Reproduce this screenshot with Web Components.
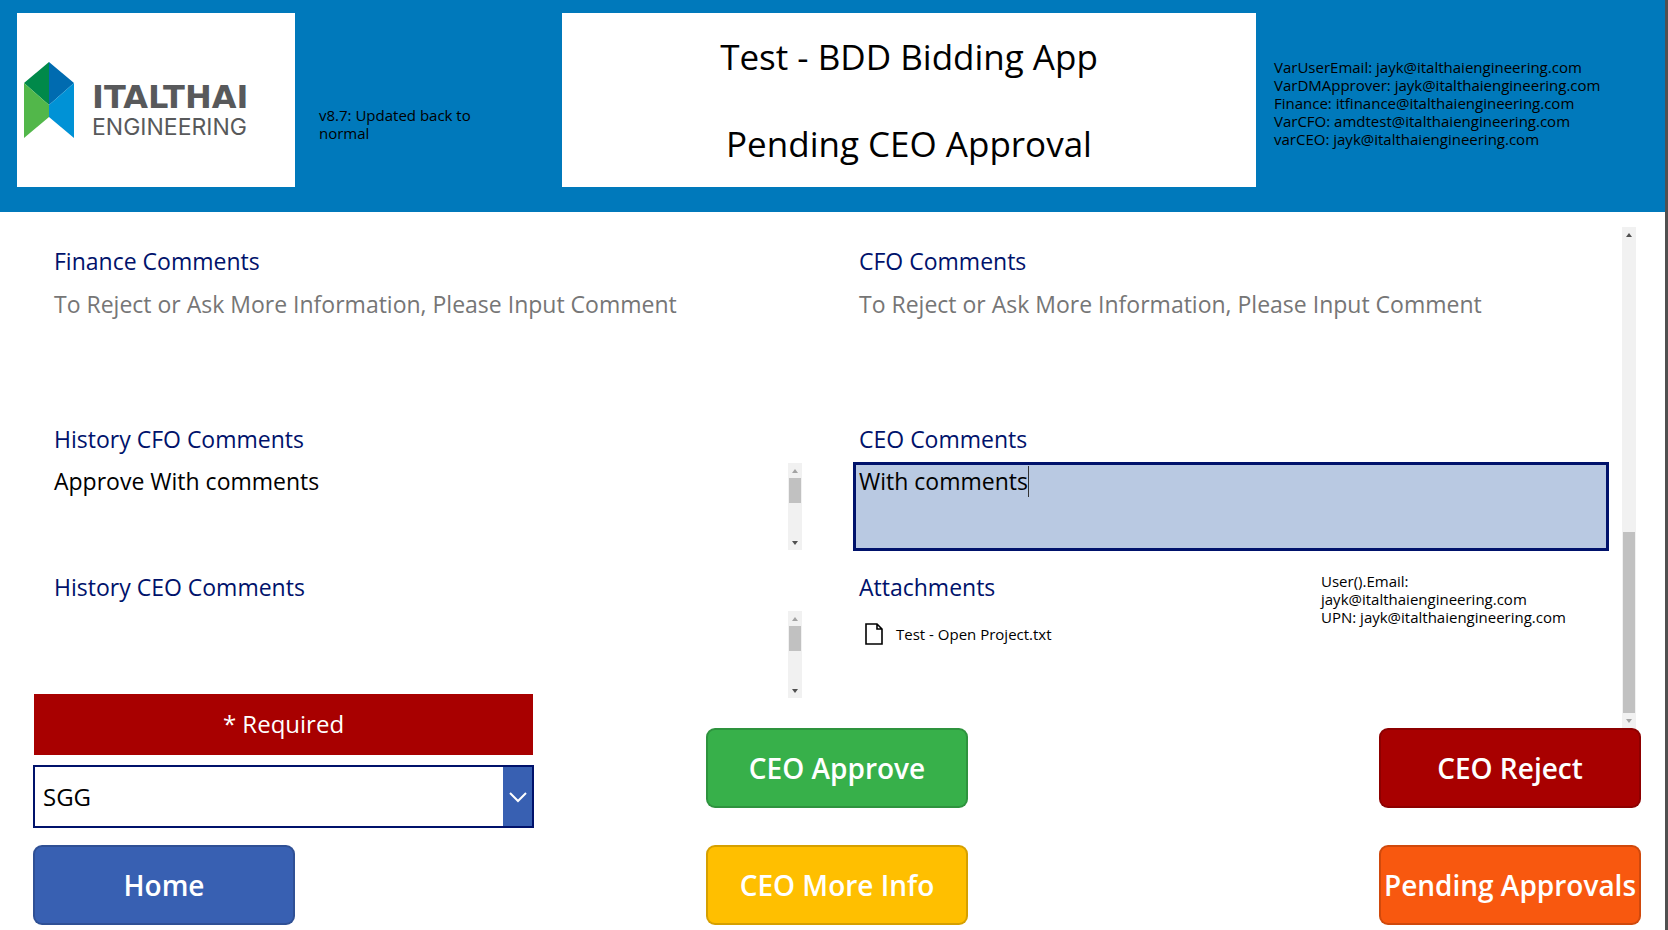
<!DOCTYPE html>
<html lang="en">
<head>
<meta charset="utf-8">
<meta name="viewport" content="width=device-width, initial-scale=1">
<title>BDD Bidding App</title>
<style>
  body { margin: 0; background: #fff; font-family: "Open Sans", "Noto Sans", sans-serif; color: #000; }
</style>
</head>
<body>
<bidding-app></bidding-app>
<script>
const define = (name, html, setup) => customElements.define(name, class extends HTMLElement {
  constructor() {
    super();
    this.attachShadow({ mode: 'open' }).innerHTML = html;
  }
  connectedCallback() {
    if (setup) setup(this, this.shadowRoot);
  }
});

define('company-logo', `
<style>
  :host { display: flex; align-items: center; gap: 18px; box-sizing: border-box; height: 174px; padding: 0 7px; background: #fff; color: #58595b; overflow: hidden; }
  svg { flex: none; width: 50px; height: 76px; }
  .name { padding-top: 22px; }
  b, span { display: block; white-space: nowrap; }
  b { font: 700 32px/32px "DejaVu Sans", sans-serif; }
  span { font: 400 23px/28px Inter, sans-serif; }
</style>
<svg viewBox="0 0 50 76" aria-hidden="true">
  <path fill="#00894a" d="M25 0v43L0 21z"/>
  <path fill="#006bb0" d="M25 0l25 21-25 22z"/>
  <path fill="#52b74a" d="M0 21l25 22v12L0 76z"/>
  <path fill="#0092d6" d="M50 21L25 43v12l25 21z"/>
</svg>
<div class="name"><b>ITALTHAI</b><span>ENGINEERING</span></div>`);

define('app-header', `
<style>
  :host { display: grid; grid-template-columns: 278fr 267fr 694fr 409fr; align-items: start; box-sizing: border-box; height: 212px; padding: 13px 0 0 17px; background: #0079bb; font-size: 15px; line-height: 18px; }
  .version { margin: 0; padding: 93px 64px 0 24px; }
  .titles { display: grid; grid-template-rows: 1fr 1fr; height: 174px; background: #fff; text-align: center; }
  h1, h2 { display: grid; place-items: center; margin: 0; font-size: 35px; line-height: 48px; font-weight: 400; }
  .vars { margin: 0; padding: 45px 0 0 18px; }
</style>
<company-logo></company-logo>
<p class="version">v8.7: Updated back to normal</p>
<div class="titles"><h1>Test - BDD Bidding App</h1><h2>Pending CEO Approval</h2></div>
<p class="vars">VarUserEmail: jayk@italthaiengineering.com<br>VarDMApprover: jayk@italthaiengineering.com<br>Finance: itfinance@italthaiengineering.com<br>VarCFO: amdtest@italthaiengineering.com<br>varCEO: jayk@italthaiengineering.com</p>`);

define('scroll-bar', `
<style>
  :host { display: flex; flex-direction: column; flex: none; width: 14px; background: #f1f1f1; }
  .arrow { flex: none; display: grid; place-items: center; height: 15px; color: #505050; }
  .arrow.off { color: #a3a3a3; }
  svg { width: 6px; height: 4px; fill: currentColor; }
  .track { flex: 1; display: flex; flex-direction: column; padding: 0 1px; }
  .thumb { background: #c1c1c1; height: var(--thumb, 25px); }
  :host([at="end"]) .track { justify-content: flex-end; }
</style>
<span class="arrow up"><svg viewBox="0 0 6 4"><path d="M0 4l3-4 3 4z"/></svg></span>
<div class="track"><div class="thumb"></div></div>
<span class="arrow down"><svg viewBox="0 0 6 4"><path d="M0 0h6L3 4z"/></svg></span>`,
(host, root) => {
  root.querySelector(host.getAttribute('at') === 'end' ? '.down' : '.up').classList.add('off');
});

define('comment-field', `
<style>
  :host { display: flex; flex-direction: column; gap: 7px; min-width: 0; font-size: 23px; line-height: 32px; }
  label { padding-left: 6px; color: #00126b; }
  .box { position: relative; display: flex; box-sizing: border-box; height: var(--box-height, 89px); border: 3px solid transparent; }
  textarea { flex: 1; min-width: 0; margin: 0; padding: 0 3px; border: 0; outline: 0; resize: none; overflow: hidden; background: none; font: inherit; color: #000; }
  textarea::placeholder { color: #767676; opacity: 1; }
  :host([history]) .box { border-width: 1px 2px 1px 3px; }
  :host([history]) textarea { padding-top: 2px; }
  :host([active]) .box { border-color: #00126b; background: #b9c9e2; }
  .caret { display: none; position: absolute; left: 172px; top: 1px; width: 1px; height: 31px; background: #333; }
  :host([active]) .caret { display: block; }
  scroll-bar { display: none; }
  :host([history]) scroll-bar { display: flex; }
</style>
<label for="comment"></label>
<div class="box"><textarea id="comment"></textarea><i class="caret"></i><scroll-bar></scroll-bar></div>`,
(host, root) => {
  const area = root.querySelector('textarea');
  root.querySelector('label').textContent = host.getAttribute('label');
  area.placeholder = host.getAttribute('placeholder') || '';
  area.value = host.getAttribute('value') || '';
  area.readOnly = host.hasAttribute('history');
});

define('attachment-card', `
<style>
  :host { display: grid; grid-template-columns: 1fr 288px; font-size: 15px; line-height: 18px; }
  h3 { margin: 0; padding-left: 6px; font-size: 23px; line-height: 32px; font-weight: 400; color: #00126b; }
  a { display: flex; align-items: center; gap: 13px; padding: 20px 0 0 12px; color: #000; text-decoration: none; }
  svg { width: 18px; height: 22px; }
  p { margin: 0; padding-top: 1px; }
</style>
<div>
  <h3>Attachments</h3>
  <a href="#attachment"><svg viewBox="0 0 18 22" fill="none" stroke="#000" stroke-width="1.6" aria-hidden="true"><path d="M1 1h11l5 5v15H1zM12 1v5h5"/></svg>Test - Open Project.txt</a>
</div>
<p>User().Email: jayk@italthaiengineering.com<br>UPN: jayk@italthaiengineering.com</p>`);

define('comment-form', `
<style>
  :host { display: flex; gap: 13px; box-sizing: border-box; height: 501px; margin-top: 15px; padding: 0 29px 0 48px; }
  .cards { flex: 1; min-width: 0; display: grid; grid-template-columns: minmax(0, 1fr) minmax(0, 1fr); align-content: start; gap: 20px 49px; padding-top: 18px; }
  .tall { --box-height: 118px; gap: 8px; }
  scroll-bar { --thumb: 181px; }
</style>
<div class="cards">
  <comment-field class="tall" label="Finance Comments" placeholder="To Reject or Ask More Information, Please Input Comment"></comment-field>
  <comment-field class="tall" label="CFO Comments" placeholder="To Reject or Ask More Information, Please Input Comment"></comment-field>
  <comment-field history label="History CFO Comments" value="Approve With comments"></comment-field>
  <comment-field active label="CEO Comments" value="With comments"></comment-field>
  <comment-field history label="History CEO Comments"></comment-field>
  <attachment-card></attachment-card>
</div>
<scroll-bar at="end"></scroll-bar>`);

define('action-button', `
<style>
  :host { display: block; width: 262px; }
  button { display: block; box-sizing: border-box; width: 100%; height: 80px; padding: 0; border: 2px solid rgba(0, 0, 0, .16); border-radius: 9px; background: var(--fill) border-box; color: #fff; font: 600 28px/38px "Open Sans", "Noto Sans", sans-serif; white-space: nowrap; cursor: pointer; }
</style>
<button type="button"><slot></slot></button>`);

define('company-picker', `
<style>
  :host { display: block; font-size: 24px; line-height: 32px; }
  label { display: flex; justify-content: center; box-sizing: border-box; height: 61px; margin: 0 1px 10px; padding-top: 14px; background: #a80000; color: #fff; }
  .box { display: flex; position: relative; }
  select { flex: 1; appearance: none; box-sizing: border-box; height: 63px; margin: 0; padding: 0 40px 0 8px; border: 2px solid #00126b; border-radius: 0; background: #fff; color: #000; font: inherit; }
  .arrow { position: absolute; top: 2px; right: 2px; bottom: 2px; width: 29px; display: grid; place-items: center; background: #3860b2; pointer-events: none; }
  svg { width: 20px; height: 12px; }
</style>
<label for="company">* Required</label>
<div class="box">
  <select id="company"><option>SGG</option></select>
  <span class="arrow"><svg viewBox="0 0 20 12" fill="none" stroke="#fff" stroke-width="2"><path d="M2 2l8 8 8-8"/></svg></span>
</div>`);

define('action-bar', `
<style>
  :host { display: grid; grid-template-columns: 1fr 262px 1fr; align-items: end; margin-top: -34px; padding: 0 24px 5px 33px; }
  .stack { display: flex; flex-direction: column; gap: 37px; }
  .left { gap: 17px; }
  .right { align-items: flex-end; }
  company-picker { width: 501px; max-width: 80%; }
</style>
<div class="stack left"><company-picker></company-picker><action-button style="--fill:#3860b2">Home</action-button></div>
<div class="stack"><action-button style="--fill:#37b04a">CEO Approve</action-button><action-button style="--fill:#ffbf00">CEO More Info</action-button></div>
<div class="stack right"><action-button style="--fill:#a80000">CEO Reject</action-button><action-button style="--fill:#f8580f">Pending Approvals</action-button></div>`);

define('bidding-app', `
<style>
  :host { display: block; box-sizing: border-box; min-height: 100vh; border-right: 3px solid #505050; }
</style>
<app-header></app-header>
<main><comment-form></comment-form><action-bar></action-bar></main>`);
</script>
</body>
</html>
